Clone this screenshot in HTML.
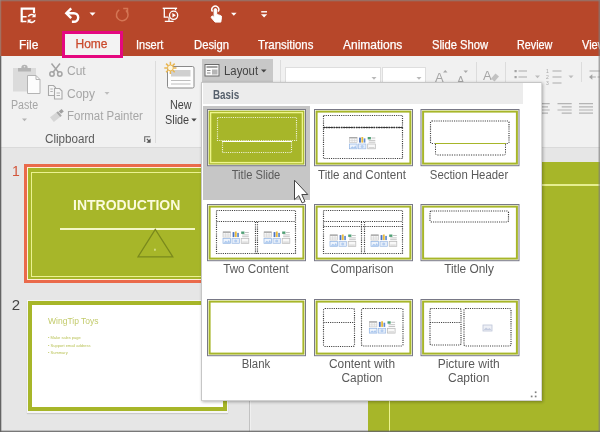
<!DOCTYPE html>
<html><head><meta charset="utf-8"><title>Layout</title>
<style>
html,body{margin:0;padding:0;}
body{width:600px;height:432px;overflow:hidden;position:relative;background:#e6e6e6;font-family:"Liberation Sans",sans-serif;font-size:12px;}
.a{position:absolute;}
.t{position:absolute;white-space:nowrap;line-height:12px;font-size:12px;}
.tab{color:#fff;top:38.500px;-webkit-text-stroke:.25px #fff;}
.dis{color:#a6a6a6;}
.lbl{color:#5a5a5a;text-align:center;width:110px;}
.th{position:absolute;width:97px;height:55px;border:1px solid #6e6e78;background:#fff;}
.th i{position:absolute;left:1px;top:1px;right:1px;bottom:1px;border:2px solid #a7b92c;background:#fff;}
.d{position:absolute;border:1px dotted #222;box-sizing:border-box;}
#w{position:absolute;left:0;top:0;width:600px;height:432px;overflow:hidden;will-change:transform;filter:blur(.4px);}
</style></head><body>
<div id="w">
<!-- header -->
<div class="a" id="hdr" style="left:0;top:0;width:600px;height:56px;background:#b7472a;"></div>

<div class="a" id="rib" style="left:0;top:56px;width:600px;height:91px;background:#f1f1f1;"></div>
<!-- tabs -->
<div class="a" style="left:61.600px;top:31px;width:61.400px;height:27.400px;box-sizing:border-box;border:3px solid #e5087f;background:#f3f3f3;"></div>
<div class="t tab" style="left:19px;">File</div>
<div class="t" style="left:75.500px;top:38.300px;color:#cb4a2c;-webkit-text-stroke:.25px #cb4a2c;">Home</div>
<div class="t tab" style="left:136px;transform:scaleX(0.913);transform-origin:0 0;">Insert</div>
<div class="t tab" style="left:193.5px;transform:scaleX(0.94);transform-origin:0 0;">Design</div>
<div class="t tab" style="left:258px;transform:scaleX(0.95);transform-origin:0 0;">Transitions</div>
<div class="t tab" style="left:343px;transform:scaleX(1.0);transform-origin:0 0;">Animations</div>
<div class="t tab" style="left:431.5px;transform:scaleX(0.935);transform-origin:0 0;">Slide Show</div>
<div class="t tab" style="left:516.5px;transform:scaleX(0.9);transform-origin:0 0;">Review</div>
<div class="t tab" style="left:582px;transform:scaleX(0.92);transform-origin:0 0;">View</div>
<!-- QAT icons -->
<svg class="a" style="left:0;top:0;" width="300" height="30" viewBox="0 0 300 30" fill="none" stroke="#fff" stroke-width="1.6">
 <!-- save/sync -->
 <path d="M21.700 22.300v-13.600h12.300v4.600" stroke-width="2.200"/>
 <path d="M22 16.800h4.600M22 21.600h4.400" stroke-width="1.500"/>
 <path d="M28.300 16.600a3.700 3.700 0 0 1 6.300-.6M34.900 20.200a3.700 3.700 0 0 1-6.300 .8" stroke-width="1.600"/>
 <path d="M35.600 13.400v3.900h-3.900z" fill="#fff" stroke="none"/>
 <path d="M27.600 23.500v-3.900h3.900z" fill="#fff" stroke="none"/>
 <!-- undo -->
 <path d="M67.500 13.200h6.400a4.300 4.300 0 0 1 0 8.600h-2" stroke-width="2.400"/>
 <path d="M71.200 8.300l-4.900 4.900 4.900 4.900" stroke-width="2.400"/>
 <path d="M89.500 12.600h6l-3 3.200z" fill="#fff" stroke="none"/>
 <!-- redo faded -->
 <path d="M119.300 9.900a5.800 5.800 0 1 0 6.600 .5" stroke="#d47655" stroke-width="1.500"/>
 <path d="M123.200 8.500h4.300v4.300" stroke="#d47655" stroke-width="1.500"/>
 <!-- slideshow -->
 <path d="M162.7 8.3h14.4" stroke-width="1.4"/>
 <path d="M164.3 8.6v8.6h4.2M175.5 8.6v1.6" stroke-width="1.3"/>
 <circle cx="173.600" cy="15.300" r="4.100" stroke-width="1.300"/>
 <path d="M172.400 13.100l3.500 2.200-3.500 2.200z" fill="#fff" stroke="none"/>
 <path d="M169 17.300v3.600M164.800 21.300h8.800" stroke-width="1.300"/>
 <!-- touch -->
 <g transform="translate(-1.700,-.3)">
 <path d="M214.2 12a3.500 3.500 0 1 1 5.600 0" stroke-width="1.400"/>
 <path d="M215.800 17.800v-7.600a1.300 1.300 0 0 1 2.600 0v4.600l3.600 .9a1.600 1.600 0 0 1 1.200 1.800l-.7 4.900h-5.700l-3.800-4.400a1.200 1.200 0 0 1 1.800-1.400z" fill="#fff" stroke-width="1"/>
 </g>
 <path d="M231 12.8h5.6l-2.8 3z" fill="#fff" stroke="none"/>
 <!-- customize -->
 <path d="M261.2 11.8h5.8" stroke-width="1.4"/>
 <path d="M261 14.2h6.2l-3.1 3.2z" fill="#fff" stroke="none"/>
</svg>
<!-- ribbon -->
<div class="a" style="left:0;top:147px;width:600px;height:1px;background:#dadada;"></div>
<!-- panes -->
<div class="a" style="left:248.700px;top:148px;width:1.200px;height:284px;background:#c2c2c2;"></div>
<div class="a" style="left:250px;top:148px;width:1px;height:284px;background:#f0f0f0;"></div>
<div class="a" style="left:368px;top:162px;width:232px;height:270px;background:#a7b629;"></div>
<div class="a" style="left:368px;top:184.200px;width:232px;height:1.600px;background:#e6ee90;"></div>
<div class="a" style="left:388.600px;top:184.200px;width:1.500px;height:248px;background:#ecf390;"></div>

<!-- ribbon content -->
<svg class="a" style="left:0;top:56px;" width="600" height="92" viewBox="0 56 600 92" fill="none">
 <!-- paste icon -->
 <rect x="13" y="68" width="23" height="23.500" fill="#dbdbdb"/>
 <path d="M18 71.500v-3.500h3.300a3.200 3.200 0 0 1 6.400 0h3.300v3.500z" fill="#b4b4b4"/>
 <circle cx="24.500" cy="66.800" r="0.800" fill="#e8e8e8"/>
 <path d="M27.500 75.500h8.500l4 4v14h-12.500z" fill="#fcfcfc" stroke="#b4b4b4" stroke-width="1"/>
 <path d="M36 75.500v4h4" stroke="#b4b4b4" stroke-width="1"/>
 <path d="M22 118.500h5l-2.500 2.800z" fill="#b4b4b4"/>
 <!-- scissors -->
 <g stroke="#a4a4a4" stroke-width="1.500">
 <path d="M51.5 63.5l7.300 9.300M60 63.5l-7.300 9.300"/>
 <circle cx="52" cy="74" r="2.2"/><circle cx="59.800" cy="74" r="2.2"/>
 </g>
 <!-- copy -->
 <g stroke="#a9a9a9" stroke-width="1.1" fill="#f6f6f6">
 <path d="M48.500 85.500h5l2 2v8h-7z"/>
 <path d="M54.500 88.500h5l2.500 2.500v8h-7.500z"/>
 <path d="M50.300 89h2.500M50.300 91.500h2.500M56.500 93h3.500M56.500 95.500h3.500" stroke-width="0.9"/>
 </g>
 <path d="M104.500 92h5l-2.500 2.800z" fill="#bdbdbd"/>
 <!-- format painter -->
 <path d="M50 117.300l6.300-4.800 3.800 4.600-6.300 4.800z" fill="#d6d6d6"/>
 <path d="M56.300 112.500l1.700-1.300 3.800 4.600-1.700 1.300z" fill="#a8a8a8"/>
 <path d="M58.800 111.200l2.800-2.200 2.200 2.600-2.800 2.200z" fill="#a0a0a0"/>
 <!-- dialog launcher -->
 <path d="M144.700 142v-5.200h5.500" stroke="#6a6a6a" stroke-width="1.100"/>
 <path d="M146.800 138.800l2.600 2.600" stroke="#555" stroke-width="1.200"/>
 <path d="M150.600 138.600v4.200h-4.200z" fill="#555"/>
 <!-- separators -->
 <path d="M155.500 61v82M280.500 60v22M476.500 62v20M505.500 62v20M581.500 62v20" stroke="#dcdcdc" stroke-width="1"/>
 <!-- new slide icon -->
 <rect x="167.500" y="66.500" width="26.500" height="21.500" rx="1.500" fill="#fdfdfd" stroke="#8a8a8a" stroke-width="1"/>
 <rect x="171" y="70" width="19.500" height="6.500" fill="#d0d0d0"/>
 <path d="M171 80.500h19.500M171 84h19.500" stroke="#bdbdbd" stroke-width="1"/>
 <g stroke="#e9b652" stroke-width="1.500"><path d="M170.400 61.800v12.200M164.300 67.900h12.200M166.100 63.600l8.600 8.600M174.700 63.600l-8.600 8.600"/></g>
 <circle cx="170.400" cy="67.900" r="2.900" fill="#fdf6e0" stroke="#e9b652" stroke-width="1"/>
 <path d="M191.300 118.600h5.400l-2.700 3z" fill="#484848"/>
 <!-- layout button -->
 <rect x="202" y="59" width="71" height="23" fill="#c8c8c8"/>
 <rect x="205" y="64.500" width="14" height="11.500" fill="#fbfbfb" stroke="#6a6a6a" stroke-width="1"/>
 <path d="M206.500 67h11" stroke="#8c8c8c" stroke-width="1.600"/>
 <path d="M207 70.500h3.500M207 73h3.500" stroke="#8c8c8c" stroke-width="1"/>
 <path d="M212 69.500h5.500v5h-5.500z" fill="#b5b5b5"/>
 <path d="M261 69.500h5.500l-2.750 3z" fill="#444"/>
 <!-- font combos -->
 <rect x="285.500" y="67.500" width="95" height="16" fill="#fff" stroke="#dedede"/>
 <rect x="382.500" y="67.500" width="43" height="16" fill="#fff" stroke="#dedede"/>
 <path d="M371.500 77h5l-2.500 2.800zM416.500 77h5l-2.500 2.800z" fill="#b9b9b9"/>
 <!-- grow/shrink arrows -->
 <path d="M443 72.500h4.500l-2.250 -2.600zM463.500 70.500h4.500l-2.250 2.600z" fill="#a9a9a9"/>
 <!-- eraser -->
 <path d="M491 78.500l4.500-5 3.500 3-4.500 5z" fill="#c2c2c2"/>
 <!-- bullets -->
 <g fill="#a4a4a4"><rect x="514.500" y="70" width="2.200" height="2.200"/><rect x="514.500" y="76" width="2.200" height="2.200"/></g>
 <path d="M518.500 71h8.500M518.500 77h8.500" stroke="#ababab" stroke-width="1.100"/>
 <path d="M535 75.500h5l-2.500 2.800zM568.500 75.500h5l-2.500 2.800z" fill="#bdbdbd"/>
 <path d="M552.500 71h9M552.500 77h9M552.500 83h9" stroke="#ababab" stroke-width="1.100"/>
 <!-- indent -->
 <path d="M589.500 71h10.500M591 77h4.800M597.500 77h2.500" stroke="#ababab" stroke-width="1.100"/>
 <path d="M592.300 74.300l-3.300 2.700 3.300 2.700z" fill="#a4a4a4"/>
 <!-- alignment -->
 <g stroke="#b4b4b4" stroke-width="1.200">
 <path d="M541 103.600h8.700M541 106.800h7M541 110h8.700M541 113.200h7"/>
 <path d="M557.500 103.600h14.200M561.700 106.800h10M557.500 110h14.200M561.700 113.200h10"/>
 <path d="M579 103.600h14M579 106.800h14M579 110h14M579 113.200h14"/>
 </g>
</svg>
<div class="t dis" style="left:11px;top:99px;transform:scaleX(0.887);transform-origin:0 0;">Paste</div>
<div class="t dis" style="left:67px;top:65px;">Cut</div>
<div class="t dis" style="left:67px;top:88px;">Copy</div>
<div class="t dis" style="left:67px;top:110px;transform:scaleX(0.956);transform-origin:0 0;">Format Painter</div>
<div class="t" style="left:45px;top:133px;color:#5c5c5c;transform:scaleX(0.97);transform-origin:0 0;">Clipboard</div>
<div class="t" style="left:169.5px;top:99px;color:#444;transform:scaleX(0.9);transform-origin:0 0;">New</div>
<div class="t" style="left:164.5px;top:114px;color:#444;transform:scaleX(0.904);transform-origin:0 0;">Slide</div>
<div class="t" style="left:223.5px;top:65px;color:#444;transform:scaleX(0.946);transform-origin:0 0;">Layout</div>
<div class="t dis" style="left:435px;top:72px;font-size:13px;">A</div>
<div class="t dis" style="left:457px;top:74px;font-size:11px;">A</div>
<div class="t dis" style="left:483px;top:70px;font-size:13px;">A</div>
<div class="t dis" style="left:546px;top:68px;font-size:5px;line-height:6px;">1<br>2<br>3</div>

<!-- slides -->
<div class="t" style="left:12px;top:164px;font-size:14px;line-height:14px;color:#d2553a;">1</div>
<div class="a" style="left:24px;top:164px;width:200px;height:119px;box-sizing:border-box;border:3px solid #ea6a4b;background:#fff1d8;"></div>
<div class="a" style="left:28px;top:168px;width:192px;height:111px;background:#a7b629;"></div>
<div class="a" style="left:31.400px;top:171.600px;width:185px;height:105.400px;box-sizing:border-box;border:1.600px solid #ecf291;"></div>
<div class="t" style="left:73px;top:197.500px;font-size:14px;line-height:14px;font-weight:bold;color:#fbfbdc;">INTRODUCTION</div>
<div class="a" style="left:60px;top:228.200px;width:135px;height:1.500px;background:#f3f6c6;"></div>
<svg class="a" style="left:130px;top:225px;" width="50" height="40" viewBox="130 225 50 40" fill="none"><path d="M155.300 229.300l-17.300 27.500h34.800z" stroke="#7a891c" stroke-width="1.250"/><rect x="154.200" y="248.600" width="1.500" height="2.300" rx=".7" fill="#d9e08e"/></svg>
<div class="t" style="left:11.800px;top:297.300px;font-size:15px;line-height:15px;color:#444;">2</div>
<div class="a" style="left:26.500px;top:300px;width:201.700px;height:112.600px;background:#f6f6f6;box-shadow:0 1px 1px rgba(0,0,0,.12);"></div>
<div class="a" style="left:27.700px;top:301.200px;width:199.300px;height:110.300px;box-sizing:border-box;border:4.100px solid #a7b629;background:#fff;"></div>
<div class="t" style="left:47.800px;top:316px;font-size:9px;line-height:10px;color:#c3cb6c;transform:scaleX(.945);transform-origin:0 0;">WingTip Toys</div>
<div class="t" style="left:48px;top:334px;font-size:4px;line-height:7.500px;color:#b9c256;">• Make sales page<br>• Support email address<br>• Summary</div>
<!-- PANEL-START -->
<div class="a" style="left:201px;top:82px;width:340.800px;height:319.200px;box-sizing:border-box;border:1px solid #c6c6c6;border-right-color:#d8d8d8;border-bottom-color:#d0d0d0;background:#fff;box-shadow:1px 1px 3px rgba(0,0,0,.3);"></div>
<div class="a" style="left:203px;top:83px;width:320px;height:21px;background:#ececec;"></div>
<div class="a" style="left:202.500px;top:105.500px;width:107.200px;height:94px;background:#c6c6c6;"></div>
<div class="t" style="left:212.500px;top:89px;color:#56606c;font-weight:bold;transform:scaleX(0.82);transform-origin:0 0;">Basis</div>
<svg class="a" style="left:0;top:0;" width="600" height="432" viewBox="0 0 600 432" fill="none">
<g transform="translate(207,109)"><rect x="0.5" y="0.5" width="98" height="56.200" fill="#fff" stroke="#787886" stroke-width="1"/><rect x="2.600" y="2.600" width="93.800" height="52" fill="#a7b629" stroke="#a7b629" stroke-width="2"/><rect x="3.600" y="3.600" width="91.800" height="50" fill="none" stroke="#eef58c" stroke-width="1.400"/><g opacity=".82"><rect x="10.5" y="8.5" width="79" height="23" rx="0" fill="none" stroke="#fff" stroke-width="1.150" stroke-dasharray="1.100 1.100"/></g><path d="M15 32.500h70" stroke="#fff" stroke-width="1"/><g opacity=".82"><path d="M15.500 33.500v10h69v-10" stroke="#fff" stroke-width="1.150" stroke-dasharray="1.100 1.100"/></g></g>
<g transform="translate(314,109)"><rect x="0.5" y="0.5" width="98" height="56.200" fill="#fff" stroke="#787886" stroke-width="1"/><rect x="2.600" y="2.600" width="93.800" height="52" fill="#fff" stroke="#a7b629" stroke-width="2"/><rect x="9.5" y="6.5" width="79" height="12" rx="0" fill="none" stroke="#3c3c3c" stroke-width="1.150" stroke-dasharray="1.100 1.100"/><rect x="9.5" y="18.5" width="79" height="31" rx="0" fill="none" stroke="#3c3c3c" stroke-width="1.150" stroke-dasharray="1.100 1.100"/><path d="M9.500 18.500h79" stroke="#333" stroke-width="1.500" stroke-dasharray="1.5 1"/><rect x="35.5" y="28.4" width="7.600" height="5.200" fill="#f7f7f7" stroke="#bdbdbd" stroke-width=".6"/><rect x="35.5" y="28.0" width="7.600" height="1.400" fill="#a9a9a9"/><path d="M38.1 29.4v4M40.6 29.4v4M35.5 31.5h7.600" stroke="#cfcfcf" stroke-width=".5"/><rect x="35.5" y="35.0" width="7.600" height="4.800" fill="#eef4fc" stroke="#8fb2e2" stroke-width=".7"/><path d="M36.1 39.2l2.200-2 1.600 1.200 1.400-1.800 1.400 2.600z" fill="#a8c6ee"/><rect x="45.1" y="28.6" width="1.800" height="5" fill="#4a72c0"/><rect x="47.4" y="28.0" width="1.800" height="5.600" fill="#e9bb3c"/><rect x="49.7" y="29.4" width="1.700" height="4.200" fill="#5f8ad0"/><rect x="44.5" y="35.0" width="7.400" height="4.800" fill="#e4edf9" stroke="#9dbae4" stroke-width=".7"/><circle cx="48.2" cy="37.4" r="1.500" fill="#b4cdf0"/><rect x="53.7" y="28.0" width="3.200" height="2.400" fill="#4f9f74"/><path d="M57.5 29.0h3.800M54.7 31.4h6.600M54.7 33.2h6.600" stroke="#b4b4b4" stroke-width=".8"/><rect x="53.7" y="35.0" width="7.600" height="4.800" fill="#f8f8f8" stroke="#b6b6b6" stroke-width=".7"/><path d="M54.7 38.6h5.600" stroke="#c6c6c6" stroke-width=".8"/></g>
<g transform="translate(420.5,109)"><rect x="0.5" y="0.5" width="98" height="56.200" fill="#fff" stroke="#787886" stroke-width="1"/><rect x="2.600" y="2.600" width="93.800" height="52" fill="#fff" stroke="#a7b629" stroke-width="2"/><rect x="10" y="12" width="78.5" height="22.5" rx="1.5" fill="none" stroke="#3c3c3c" stroke-width="1.150" stroke-dasharray="1.100 1.100"/><rect x="14" y="33.500" width="71" height="2" fill="#fff"/><path d="M14.500 34.500h71" stroke="#a7b629" stroke-width="1"/><path d="M15 35v9.500a1.500 1.500 0 0 0 1.500 1.500h67a1.500 1.500 0 0 0 1.500-1.500v-9.500" stroke="#3c3c3c" stroke-width="1" stroke-dasharray="1.2 1.2"/></g>
<g transform="translate(207,204)"><rect x="0.5" y="0.5" width="98" height="56.200" fill="#fff" stroke="#787886" stroke-width="1"/><rect x="2.600" y="2.600" width="93.800" height="52" fill="#fff" stroke="#a7b629" stroke-width="2"/><rect x="9.5" y="6.5" width="79" height="43" rx="0" fill="none" stroke="#3c3c3c" stroke-width="1.150" stroke-dasharray="1.100 1.100"/><path d="M9.5 17.5L88.5 17.5" stroke="#3c3c3c" stroke-width="1.150" stroke-dasharray="1.100 1.100"/><path d="M48.5 18L48.5 49.5" stroke="#3c3c3c" stroke-width="1.150" stroke-dasharray="1.100 1.100"/><path d="M50.5 18L50.5 49.5" stroke="#3c3c3c" stroke-width="1.150" stroke-dasharray="1.100 1.100"/><rect x="16.0" y="27.9" width="7.600" height="5.200" fill="#f7f7f7" stroke="#bdbdbd" stroke-width=".6"/><rect x="16.0" y="27.5" width="7.600" height="1.400" fill="#a9a9a9"/><path d="M18.6 28.9v4M21.1 28.9v4M16.0 31.0h7.600" stroke="#cfcfcf" stroke-width=".5"/><rect x="16.0" y="34.5" width="7.600" height="4.800" fill="#eef4fc" stroke="#8fb2e2" stroke-width=".7"/><path d="M16.6 38.7l2.200-2 1.600 1.200 1.400-1.800 1.400 2.600z" fill="#a8c6ee"/><rect x="25.6" y="28.1" width="1.800" height="5" fill="#4a72c0"/><rect x="27.9" y="27.5" width="1.800" height="5.600" fill="#e9bb3c"/><rect x="30.2" y="28.9" width="1.700" height="4.200" fill="#5f8ad0"/><rect x="25.0" y="34.5" width="7.400" height="4.800" fill="#e4edf9" stroke="#9dbae4" stroke-width=".7"/><circle cx="28.7" cy="36.9" r="1.500" fill="#b4cdf0"/><rect x="34.2" y="27.5" width="3.200" height="2.400" fill="#4f9f74"/><path d="M38.0 28.5h3.800M35.2 30.9h6.600M35.2 32.7h6.600" stroke="#b4b4b4" stroke-width=".8"/><rect x="34.2" y="34.5" width="7.600" height="4.800" fill="#f8f8f8" stroke="#b6b6b6" stroke-width=".7"/><path d="M35.2 38.1h5.600" stroke="#c6c6c6" stroke-width=".8"/><rect x="57.0" y="27.9" width="7.600" height="5.200" fill="#f7f7f7" stroke="#bdbdbd" stroke-width=".6"/><rect x="57.0" y="27.5" width="7.600" height="1.400" fill="#a9a9a9"/><path d="M59.6 28.9v4M62.1 28.9v4M57.0 31.0h7.600" stroke="#cfcfcf" stroke-width=".5"/><rect x="57.0" y="34.5" width="7.600" height="4.800" fill="#eef4fc" stroke="#8fb2e2" stroke-width=".7"/><path d="M57.6 38.7l2.200-2 1.600 1.200 1.400-1.800 1.400 2.600z" fill="#a8c6ee"/><rect x="66.6" y="28.1" width="1.800" height="5" fill="#4a72c0"/><rect x="68.9" y="27.5" width="1.800" height="5.600" fill="#e9bb3c"/><rect x="71.2" y="28.9" width="1.700" height="4.200" fill="#5f8ad0"/><rect x="66.0" y="34.5" width="7.400" height="4.800" fill="#e4edf9" stroke="#9dbae4" stroke-width=".7"/><circle cx="69.7" cy="36.9" r="1.500" fill="#b4cdf0"/><rect x="75.2" y="27.5" width="3.200" height="2.400" fill="#4f9f74"/><path d="M79.0 28.5h3.800M76.2 30.9h6.600M76.2 32.7h6.600" stroke="#b4b4b4" stroke-width=".8"/><rect x="75.2" y="34.5" width="7.600" height="4.800" fill="#f8f8f8" stroke="#b6b6b6" stroke-width=".7"/><path d="M76.2 38.1h5.600" stroke="#c6c6c6" stroke-width=".8"/></g>
<g transform="translate(314,204)"><rect x="0.5" y="0.5" width="98" height="56.200" fill="#fff" stroke="#787886" stroke-width="1"/><rect x="2.600" y="2.600" width="93.800" height="52" fill="#fff" stroke="#a7b629" stroke-width="2"/><rect x="9.5" y="6.5" width="79" height="43" rx="0" fill="none" stroke="#3c3c3c" stroke-width="1.150" stroke-dasharray="1.100 1.100"/><path d="M9.5 17.5L88.5 17.5" stroke="#3c3c3c" stroke-width="1.150" stroke-dasharray="1.100 1.100"/><path d="M9.5 22.5L88.5 22.5" stroke="#3c3c3c" stroke-width="1.150" stroke-dasharray="1.100 1.100"/><path d="M47.5 18L47.5 49.5" stroke="#3c3c3c" stroke-width="1.150" stroke-dasharray="1.100 1.100"/><path d="M50.5 18L50.5 49.5" stroke="#3c3c3c" stroke-width="1.150" stroke-dasharray="1.100 1.100"/><rect x="16.0" y="30.9" width="7.600" height="5.200" fill="#f7f7f7" stroke="#bdbdbd" stroke-width=".6"/><rect x="16.0" y="30.5" width="7.600" height="1.400" fill="#a9a9a9"/><path d="M18.6 31.9v4M21.1 31.9v4M16.0 34.0h7.600" stroke="#cfcfcf" stroke-width=".5"/><rect x="16.0" y="37.5" width="7.600" height="4.800" fill="#eef4fc" stroke="#8fb2e2" stroke-width=".7"/><path d="M16.6 41.7l2.200-2 1.600 1.200 1.400-1.800 1.400 2.600z" fill="#a8c6ee"/><rect x="25.6" y="31.1" width="1.800" height="5" fill="#4a72c0"/><rect x="27.9" y="30.5" width="1.800" height="5.600" fill="#e9bb3c"/><rect x="30.2" y="31.9" width="1.700" height="4.200" fill="#5f8ad0"/><rect x="25.0" y="37.5" width="7.400" height="4.800" fill="#e4edf9" stroke="#9dbae4" stroke-width=".7"/><circle cx="28.7" cy="39.9" r="1.500" fill="#b4cdf0"/><rect x="34.2" y="30.5" width="3.200" height="2.400" fill="#4f9f74"/><path d="M38.0 31.5h3.800M35.2 33.9h6.600M35.2 35.7h6.600" stroke="#b4b4b4" stroke-width=".8"/><rect x="34.2" y="37.5" width="7.600" height="4.800" fill="#f8f8f8" stroke="#b6b6b6" stroke-width=".7"/><path d="M35.2 41.1h5.600" stroke="#c6c6c6" stroke-width=".8"/><rect x="57.0" y="30.9" width="7.600" height="5.200" fill="#f7f7f7" stroke="#bdbdbd" stroke-width=".6"/><rect x="57.0" y="30.5" width="7.600" height="1.400" fill="#a9a9a9"/><path d="M59.6 31.9v4M62.1 31.9v4M57.0 34.0h7.600" stroke="#cfcfcf" stroke-width=".5"/><rect x="57.0" y="37.5" width="7.600" height="4.800" fill="#eef4fc" stroke="#8fb2e2" stroke-width=".7"/><path d="M57.6 41.7l2.200-2 1.600 1.200 1.400-1.800 1.400 2.600z" fill="#a8c6ee"/><rect x="66.6" y="31.1" width="1.800" height="5" fill="#4a72c0"/><rect x="68.9" y="30.5" width="1.800" height="5.600" fill="#e9bb3c"/><rect x="71.2" y="31.9" width="1.700" height="4.200" fill="#5f8ad0"/><rect x="66.0" y="37.5" width="7.400" height="4.800" fill="#e4edf9" stroke="#9dbae4" stroke-width=".7"/><circle cx="69.7" cy="39.9" r="1.500" fill="#b4cdf0"/><rect x="75.2" y="30.5" width="3.200" height="2.400" fill="#4f9f74"/><path d="M79.0 31.5h3.800M76.2 33.9h6.600M76.2 35.7h6.600" stroke="#b4b4b4" stroke-width=".8"/><rect x="75.2" y="37.5" width="7.600" height="4.800" fill="#f8f8f8" stroke="#b6b6b6" stroke-width=".7"/><path d="M76.2 41.1h5.600" stroke="#c6c6c6" stroke-width=".8"/></g>
<g transform="translate(420.5,204)"><rect x="0.5" y="0.5" width="98" height="56.200" fill="#fff" stroke="#787886" stroke-width="1"/><rect x="2.600" y="2.600" width="93.800" height="52" fill="#fff" stroke="#a7b629" stroke-width="2"/><rect x="9.5" y="7" width="78.5" height="11" rx="1.5" fill="none" stroke="#3c3c3c" stroke-width="1.150" stroke-dasharray="1.100 1.100"/></g>
<g transform="translate(207,299)"><rect x="0.5" y="0.5" width="98" height="56.200" fill="#fff" stroke="#787886" stroke-width="1"/><rect x="2.600" y="2.600" width="93.800" height="52" fill="#fff" stroke="#a7b629" stroke-width="2"/></g>
<g transform="translate(314,299)"><rect x="0.5" y="0.5" width="98" height="56.200" fill="#fff" stroke="#787886" stroke-width="1"/><rect x="2.600" y="2.600" width="93.800" height="52" fill="#fff" stroke="#a7b629" stroke-width="2"/><rect x="9.5" y="9.5" width="31" height="38" rx="1.5" fill="none" stroke="#3c3c3c" stroke-width="1.150" stroke-dasharray="1.100 1.100"/><path d="M9.5 23.5L40.5 23.5" stroke="#3c3c3c" stroke-width="1.150" stroke-dasharray="1.100 1.100"/><rect x="47.5" y="9.5" width="41.5" height="37.5" rx="1.5" fill="none" stroke="#3c3c3c" stroke-width="1.150" stroke-dasharray="1.100 1.100"/><rect x="55.3" y="22.7" width="7.600" height="5.200" fill="#f7f7f7" stroke="#bdbdbd" stroke-width=".6"/><rect x="55.3" y="22.3" width="7.600" height="1.400" fill="#a9a9a9"/><path d="M57.9 23.7v4M60.4 23.7v4M55.3 25.8h7.600" stroke="#cfcfcf" stroke-width=".5"/><rect x="55.3" y="29.3" width="7.600" height="4.800" fill="#eef4fc" stroke="#8fb2e2" stroke-width=".7"/><path d="M55.9 33.5l2.200-2 1.600 1.200 1.400-1.800 1.400 2.600z" fill="#a8c6ee"/><rect x="64.9" y="22.9" width="1.800" height="5" fill="#4a72c0"/><rect x="67.2" y="22.3" width="1.800" height="5.600" fill="#e9bb3c"/><rect x="69.5" y="23.7" width="1.700" height="4.200" fill="#5f8ad0"/><rect x="64.3" y="29.3" width="7.400" height="4.800" fill="#e4edf9" stroke="#9dbae4" stroke-width=".7"/><circle cx="68.0" cy="31.7" r="1.500" fill="#b4cdf0"/><rect x="73.5" y="22.3" width="3.200" height="2.400" fill="#4f9f74"/><path d="M77.3 23.3h3.800M74.5 25.7h6.600M74.5 27.5h6.600" stroke="#b4b4b4" stroke-width=".8"/><rect x="73.5" y="29.3" width="7.600" height="4.800" fill="#f8f8f8" stroke="#b6b6b6" stroke-width=".7"/><path d="M74.5 32.9h5.600" stroke="#c6c6c6" stroke-width=".8"/></g>
<g transform="translate(420.5,299)"><rect x="0.5" y="0.5" width="98" height="56.200" fill="#fff" stroke="#787886" stroke-width="1"/><rect x="2.600" y="2.600" width="93.800" height="52" fill="#fff" stroke="#a7b629" stroke-width="2"/><rect x="9.5" y="9.5" width="31" height="36.5" rx="1.5" fill="none" stroke="#3c3c3c" stroke-width="1.150" stroke-dasharray="1.100 1.100"/><path d="M9.5 23.5L40.5 23.5" stroke="#3c3c3c" stroke-width="1.150" stroke-dasharray="1.100 1.100"/><rect x="43.5" y="9.5" width="47" height="37.5" rx="1.5" fill="none" stroke="#3c3c3c" stroke-width="1.150" stroke-dasharray="1.100 1.100"/><rect x="62.500" y="26" width="9" height="6" fill="#eef0f6" stroke="#bcc4d8" stroke-width=".8"/><path d="M63 31l2.500-2.500 2 1.500 1.500-1 2 2z" fill="#c4cce0"/></g>
<g fill="#808080"><rect x="534.800" y="391.400" width="1.700" height="1.700"/><rect x="534.800" y="395.600" width="1.700" height="1.700"/><rect x="530.800" y="395.600" width="1.700" height="1.700"/></g>
<path d="M294.500 180.200v19.500l4.300-4.100 3.300 7.300 2.900-1.300-3.200-7.100h6z" fill="#fff" stroke="#444" stroke-width="1" stroke-linejoin="round"/>
</svg>
<div class="t lbl" style="left:201.3px;top:167.5px;line-height:14px;transform:scaleX(0.93);">Title Slide</div>
<div class="t lbl" style="left:307.2px;top:167.5px;line-height:14px;transform:scaleX(0.967);">Title and Content</div>
<div class="t lbl" style="left:413.7px;top:167.5px;line-height:14px;transform:scaleX(0.947);">Section Header</div>
<div class="t lbl" style="left:200.7px;top:262px;line-height:14px;transform:scaleX(0.975);">Two Content</div>
<div class="t lbl" style="left:307.2px;top:262px;line-height:14px;transform:scaleX(0.975);">Comparison</div>
<div class="t lbl" style="left:413.7px;top:262px;line-height:14px;transform:scaleX(0.99);">Title Only</div>
<div class="t lbl" style="left:200.7px;top:357px;line-height:14px;transform:scaleX(0.95);">Blank</div>
<div class="t lbl" style="left:307.2px;top:357px;line-height:14px;transform:scaleX(0.99);">Content with<br>Caption</div>
<div class="t lbl" style="left:413.7px;top:357px;line-height:14px;transform:scaleX(1.0);">Picture with<br>Caption</div>
<!-- PANEL-END -->
<!-- frame -->
<div class="a" style="left:0;top:0;width:600px;height:1px;background:rgba(135,135,135,.6);"></div>
<div class="a" style="left:0;top:1px;width:600px;height:1px;background:rgba(135,135,135,.2);"></div>
<div class="a" style="left:0;top:0;width:1px;height:56px;background:rgba(150,140,135,.6);"></div>
<div class="a" style="left:1px;top:0;width:1px;height:56px;background:rgba(150,140,135,.15);"></div>
<div class="a" style="left:0;top:56px;width:1px;height:376px;background:rgba(85,85,85,.9);"></div>
<div class="a" style="left:1px;top:56px;width:1px;height:376px;background:rgba(100,100,100,.3);"></div>
<div class="a" style="left:599px;top:0;width:1px;height:432px;background:rgba(125,125,125,.65);"></div>
<div class="a" style="left:598px;top:0;width:1px;height:432px;background:rgba(125,125,125,.3);"></div>
<div class="a" style="left:0;top:431px;width:600px;height:1px;background:rgba(100,100,100,.85);"></div>
<div class="a" style="left:0;top:430px;width:600px;height:1px;background:rgba(100,100,100,.3);"></div>
</div>
</body></html>
